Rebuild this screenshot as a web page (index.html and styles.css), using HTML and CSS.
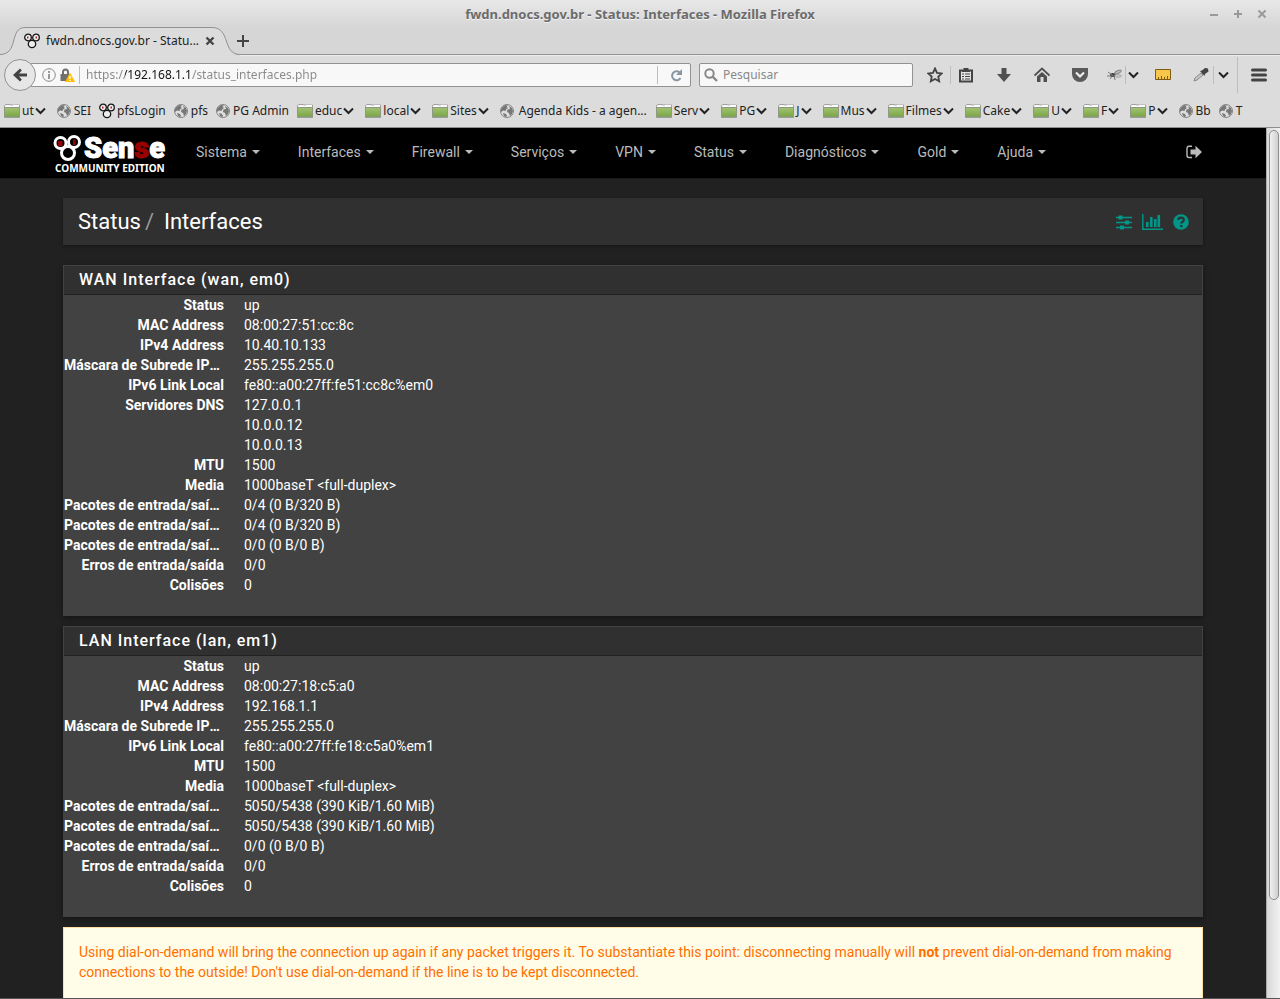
FILE: index.html
```html
<!DOCTYPE html>
<html lang="pt-BR">
<head>
<meta charset="utf-8">
<meta name="viewport" content="width=device-width, initial-scale=1">
<title>fwdn.dnocs.gov.br - Status: Interfaces</title>
<link rel="stylesheet" href="styles.css">
</head>
<body>
<svg class="sprite" aria-hidden="true">
  <defs>
    <linearGradient id="green" x1="0" y1="0" x2="0" y2="1"><stop offset="0" stop-color="#a3c374"/><stop offset="1" stop-color="#79a544"/></linearGradient>
    <symbol id="folder" viewBox="0 0 16 16">
      <path d="M.5 6V2.500L2 1.500h4l1 .5h8.500v4" fill="#f8f8f8" stroke="#a0a0a0"/>
      <path d="M.5 4.500h15v9.500H.5z" fill="url(#green)" stroke="#8f9885"/>
      <path d="M1 3.500h7l1-1h6" stroke="#fff" fill="none"/>
      <path d="M0 14.500h16" stroke="#8a8a8a" opacity=".6"/>
    </symbol>
    <symbol id="globe" viewBox="0 0 14 14">
      <circle cx="7" cy="7" r="6.500" fill="#dedede" stroke="#858585"/>
      <path d="M2 3.500 5 1l3 .5L6.500 3 8 4 6 5.500 5.500 7 3 6.500 1 8V5zM9 2l3 2 1 3-1 3-2 2-1-3-2-1 .5-2.500L10 5zM3 9l3 1 1 2-1 1-2-1z" fill="#777"/>
    </symbol>
    <symbol id="chev" viewBox="0 0 11 8"><path d="M1 1.500 5.500 6 10 1.500" fill="none" stroke="#222" stroke-width="2"/></symbol>
    <symbol id="rings" viewBox="0 0 16 16">
      <g fill="#eee" stroke="#151515" stroke-width="1.300"><circle cx="4" cy="4.500" r="3.300"/><circle cx="12" cy="4.500" r="3.300"/><circle cx="8" cy="11" r="3.700"/></g>
      <path d="M3 3.500h1.500v2H3zM11.500 3.500H13v2h-1.500z" fill="#b22"/>
    </symbol>
  </defs>
</svg>

<div class="window">
  <header class="chrome">
    <div class="titlebar">
      <span class="window-title">fwdn.dnocs.gov.br - Status: Interfaces - Mozilla Firefox</span>
      <div class="window-buttons">
        <button aria-label="Minimizar"><svg width="10" height="10"><path d="M1 6h8" stroke="#999" stroke-width="2"/></svg></button>
        <button aria-label="Maximizar"><svg width="10" height="10"><path d="M1 5h8M5 1v8" stroke="#999" stroke-width="2"/></svg></button>
        <button aria-label="Fechar"><svg width="10" height="10"><path d="M1.500 1.500l7 7m0-7l-7 7" stroke="#999" stroke-width="2"/></svg></button>
      </div>
    </div>
    <div class="tabs">
      <div class="tab">
        <svg class="tab-shape" width="240" height="29" aria-hidden="true"><path d="M0 27.500C19 27.500 9 .5 25 .5H212C231 .5 222 27.500 238 27.500H240V29H0z" fill="#dcdcdc"/><path d="M0 27.500C19 27.500 9 .5 25 .5H212C231 .5 222 27.500 240 27.500" fill="none" stroke="#929292"/></svg>
        <svg width="16" height="16" aria-hidden="true"><use href="#rings"/></svg>
        <span class="tab-label">fwdn.dnocs.gov.br - Statu...</span>
        <button aria-label="Fechar aba"><svg width="10" height="10"><path d="M1.500 1.500l7 7m0-7l-7 7" stroke="#444" stroke-width="2.400"/></svg></button>
      </div>
      <button class="new-tab" aria-label="Nova aba"><svg width="12" height="12"><path d="M0 6h12M6 0v12" stroke="#444" stroke-width="2"/></svg></button>
    </div>

    <div class="toolbar">
      <button class="back" aria-label="Voltar"><svg width="16" height="16"><path d="M1 8l7-6.500 1.800 2L7 6.500h8v3H7l2.800 3-1.800 2z" fill="#444"/></svg></button>
      <div class="urlbar">
        <svg width="14" height="14" aria-hidden="true"><circle cx="7" cy="7" r="6.300" fill="none" stroke="#888"/><path d="M7 3v2M7 6v5" stroke="#777" stroke-width="1.500"/></svg>
        <svg width="15" height="15" aria-hidden="true"><path d="M3 7V4a2.500 2.500 0 0 1 5 0v3" fill="none" stroke="#707070" stroke-width="2"/><path d="M.5 6h9v7h-9z" fill="#707070"/><path d="M10 4.500 15 14H5z" fill="#ffbf00"/><path d="M10 8v3m0 1v1" stroke="#fff" stroke-width="1.400"/></svg>
        <i class="rule"></i>
        <input class="url" type="text" aria-label="Endereço" value="https://192.168.1.1/status_interfaces.php">
        <i class="rule"></i>
        <button class="reload" aria-label="Recarregar"><svg width="13" height="13"><path d="M10 3.800A4.500 4.500 0 1 0 10.500 9" fill="none" stroke="#8a97a3" stroke-width="2"/><path d="M12 0v6H6z" fill="#8a97a3"/></svg></button>
      </div>
      <div class="search">
        <svg width="14" height="14" aria-hidden="true"><circle cx="5.500" cy="5.500" r="4.200" fill="none" stroke="#888" stroke-width="2"/><path d="M8.500 8.500 13 13" stroke="#888" stroke-width="2.400"/></svg>
        <input type="search" aria-label="Pesquisar" placeholder="Pesquisar">
      </div>
      <div class="tools">
        <button aria-label="Favoritar"><svg width="16" height="16"><path d="M8 1.500l2 4.300 4.700.6-3.400 3.200.9 4.700L8 12l-4.200 2.300.9-4.700L1.300 6.400 6 5.800z" fill="none" stroke="#444" stroke-width="1.800"/></svg></button>
        <i class="rule"></i>
        <button aria-label="Lista de favoritos"><svg width="16" height="16"><path d="M2 3.500h12v11H2z" fill="#e3e3e3" stroke="#444" stroke-width="2"/><path d="M4 4h1.500V1h5v3H12v1H4z" fill="#444"/><path d="M4 7h2m1 0h5M4 9.500h2m1 0h5M4 12h2m1 0h5" stroke="#444" stroke-width="1.200"/></svg></button>
      </div>
      <div class="tools spaced">
        <button aria-label="Downloads"><svg width="16" height="16"><path d="M5.500 1h5v6H15l-7 8-7-8h4.500z" fill="#505050"/></svg></button>
        <button aria-label="Início"><svg width="16" height="16"><path d="M.5 8.500 8 1.500l7.500 7" fill="none" stroke="#505050" stroke-width="1.800"/><path d="M3 9.500l5-4.600 5 4.600V15H9.500v-5h-3v5H3z" fill="#505050"/></svg></button>
        <button aria-label="Pocket"><svg width="16" height="16"><path d="M0 1h16v6a8 8 0 0 1-16 0z" fill="#5a5a5a"/><path d="M4 5.500l4 4 4-4" fill="none" stroke="#eee" stroke-width="2.200"/></svg></button>
      </div>
      <div class="tools bug">
        <button aria-label="Firebug"><svg width="16" height="16"><ellipse cx="6" cy="8" rx="3" ry="2" fill="#444"/><ellipse cx="11" cy="5" rx="3.500" ry="1.400" fill="#bbb" stroke="#888" transform="rotate(-25 11 5)"/><ellipse cx="11" cy="9" rx="3.500" ry="1.300" fill="#c9c9c9" stroke="#aaa"/><path d="M1 5l4 3M0 9h4M3 12l3-4m2 5L7 8" stroke="#777"/></svg></button>
        <i class="rule"></i>
        <button aria-label="Opções do Firebug"><svg width="11" height="8"><use href="#chev"/></svg></button>
      </div>
      <div class="tools ruler">
        <button aria-label="Régua"><svg width="16" height="16"><path d="M.5 2.500h15v10H.5z" fill="#f7c64a" stroke="#7e5d12"/><path d="M3.500 12v-2m3 2v-3m3 3v-2m3 2V9" stroke="#7e5d12"/></svg></button>
      </div>
      <div class="tools dropper">
        <button aria-label="Conta-gotas"><svg width="16" height="16"><path d="M1 14l1-3 6-5 2 2-6 5z" fill="#c5c5c5" stroke="#888"/><path d="M7 4l2-.5L12 1l3 .500.500 3L12 7l-.5 2z" fill="#444"/></svg></button>
        <i class="rule"></i>
        <button aria-label="Opções do conta-gotas"><svg width="11" height="8"><use href="#chev"/></svg></button>
      </div>
      <i class="rule tall"></i>
      <button class="menu" aria-label="Menu"><svg width="16" height="14"><path d="M1.500 2h13m-13 5h13m-13 5h13" stroke="#444" stroke-width="3" stroke-linecap="round"/></svg></button>
    </div>

    <nav class="bookmarks" aria-label="Favoritos">
      <button><svg width="16" height="16"><use href="#folder"/></svg>ut<svg class="chev" width="11" height="8"><use href="#chev"/></svg></button>
      <a href="#sei"><svg width="14" height="14"><use href="#globe"/></svg>SEI</a>
      <a href="#login" class="tight"><svg width="16" height="16"><use href="#rings"/></svg>pfsLogin</a>
      <a href="#pfs"><svg width="14" height="14"><use href="#globe"/></svg>pfs</a>
      <a href="#pg"><svg width="14" height="14"><use href="#globe"/></svg>PG Admin</a>
      <button><svg width="16" height="16"><use href="#folder"/></svg>educ<svg class="chev" width="11" height="8"><use href="#chev"/></svg></button>
      <button><svg width="16" height="16"><use href="#folder"/></svg>local<svg class="chev" width="11" height="8"><use href="#chev"/></svg></button>
      <button><svg width="16" height="16"><use href="#folder"/></svg>Sites<svg class="chev" width="11" height="8"><use href="#chev"/></svg></button>
      <a href="#agenda" class="wide"><svg width="14" height="14"><use href="#globe"/></svg>Agenda Kids - a agen...</a>
      <button><svg width="16" height="16"><use href="#folder"/></svg>Serv<svg class="chev" width="11" height="8"><use href="#chev"/></svg></button>
      <button><svg width="16" height="16"><use href="#folder"/></svg>PG<svg class="chev" width="11" height="8"><use href="#chev"/></svg></button>
      <button><svg width="16" height="16"><use href="#folder"/></svg>J<svg class="chev" width="11" height="8"><use href="#chev"/></svg></button>
      <button><svg width="16" height="16"><use href="#folder"/></svg>Mus<svg class="chev" width="11" height="8"><use href="#chev"/></svg></button>
      <button><svg width="16" height="16"><use href="#folder"/></svg>Filmes<svg class="chev" width="11" height="8"><use href="#chev"/></svg></button>
      <button><svg width="16" height="16"><use href="#folder"/></svg>Cake<svg class="chev" width="11" height="8"><use href="#chev"/></svg></button>
      <button><svg width="16" height="16"><use href="#folder"/></svg>U<svg class="chev" width="11" height="8"><use href="#chev"/></svg></button>
      <button><svg width="16" height="16"><use href="#folder"/></svg>F<svg class="chev" width="11" height="8"><use href="#chev"/></svg></button>
      <button><svg width="16" height="16"><use href="#folder"/></svg>P<svg class="chev" width="11" height="8"><use href="#chev"/></svg></button>
      <a href="#bb"><svg width="14" height="14"><use href="#globe"/></svg>Bb</a>
      <a href="#t"><svg width="14" height="14"><use href="#globe"/></svg>T</a>
    </nav>
  </header>

  <div class="viewport">
    <div class="page">
      <nav class="navbar">
        <div class="container">
          <a class="logo" href="#home" aria-label="Sense Community Edition">
            <span class="logo-top">
              <svg width="29" height="28" aria-hidden="true"><g fill="#000" stroke="#fff" stroke-width="3"><circle cx="7.500" cy="9" r="5.500"/><circle cx="21" cy="8" r="5.500"/><circle cx="15" cy="19" r="6.500"/></g><path d="M5 7h4.500v5H5zM20 5.500h2.500v5.500H20z" fill="#900"/></svg>
              <span class="logo-word">Sen<b>s</b>e</span>
            </span>
            <span class="logo-sub">COMMUNITY EDITION</span>
          </a>
          <ul class="menu-list">
            <li><a href="#sistema">Sistema</a></li>
            <li><a href="#interfaces">Interfaces</a></li>
            <li><a href="#firewall">Firewall</a></li>
            <li><a href="#servicos">Serviços</a></li>
            <li><a href="#vpn">VPN</a></li>
            <li><a href="#status">Status</a></li>
            <li><a href="#diagnosticos">Diagnósticos</a></li>
            <li><a href="#gold">Gold</a></li>
            <li><a href="#ajuda">Ajuda</a></li>
          </ul>
          <a class="logout" href="#logout" aria-label="Sair"><svg width="16" height="14"><path d="M6 1.200H3A2 2 0 0 0 1 3v7.500a2 2 0 0 0 2 2h3" fill="none" stroke="#bbb" stroke-width="1.400"/><path d="M4.500 4.500H9.500V.8L16 7l-6.500 6.200V9.500h-5z" fill="#bbb"/></svg></a>
        </div>
      </nav>

      <main class="content">
        <header class="page-header">
          <h1>Status<span class="slash">/</span>Interfaces</h1>
          <div class="shortcuts">
            <a href="#settings" aria-label="Configurações"><svg width="16" height="16"><path d="M0 3.500h16M0 8.500h16M0 13.500h16" stroke="#009688" stroke-width="1.600"/><path d="M2.500 1.500h4v4h-4zM9 6.500h4v4H9zM4 11.500h4v4H4z" fill="#009688"/></svg></a>
            <a href="#graph" aria-label="Gráfico"><svg width="21" height="16"><path d="M.8 0v15.200H21" fill="none" stroke="#009688" stroke-width="1.400"/><path d="M4 8h2.600v5H4zM8 3h2.600v10H8zM12 5h2.600v8H12zM15.500 1h2.600v12h-2.600z" fill="#009688"/></svg></a>
            <a href="#help" aria-label="Ajuda"><svg width="16" height="16"><circle cx="8" cy="8" r="7.800" fill="#009688"/><path d="M5.200 6C5.500 2.800 11 2.800 10.800 6c0 2-2.500 1.800-2.500 3.600M8.300 11v2.200" fill="none" stroke="#303030" stroke-width="2.200"/></svg></a>
          </div>
        </header>

        <section class="panel">
          <h2>WAN Interface (wan, em0)</h2>
          <dl>
            <dt>Status</dt><dd>up</dd>
            <dt>MAC Address</dt><dd>08:00:27:51:cc:8c</dd>
            <dt>IPv4 Address</dt><dd>10.40.10.133</dd>
            <dt>Máscara de Subrede IPv4</dt><dd>255.255.255.0</dd>
            <dt>IPv6 Link Local</dt><dd>fe80::a00:27ff:fe51:cc8c%em0</dd>
            <dt>Servidores DNS</dt><dd>127.0.0.1<br>10.0.0.12<br>10.0.0.13</dd>
            <dt>MTU</dt><dd>1500</dd>
            <dt>Media</dt><dd>1000baseT &lt;full-duplex&gt;</dd>
            <dt>Pacotes de entrada/saída</dt><dd>0/4 (0 B/320 B)</dd>
            <dt>Pacotes de entrada/saída</dt><dd>0/4 (0 B/320 B)</dd>
            <dt>Pacotes de entrada/saída</dt><dd>0/0 (0 B/0 B)</dd>
            <dt>Erros de entrada/saída</dt><dd>0/0</dd>
            <dt>Colisões</dt><dd>0</dd>
          </dl>
        </section>

        <section class="panel">
          <h2>LAN Interface (lan, em1)</h2>
          <dl>
            <dt>Status</dt><dd>up</dd>
            <dt>MAC Address</dt><dd>08:00:27:18:c5:a0</dd>
            <dt>IPv4 Address</dt><dd>192.168.1.1</dd>
            <dt>Máscara de Subrede IPv4</dt><dd>255.255.255.0</dd>
            <dt>IPv6 Link Local</dt><dd>fe80::a00:27ff:fe18:c5a0%em1</dd>
            <dt>MTU</dt><dd>1500</dd>
            <dt>Media</dt><dd>1000baseT &lt;full-duplex&gt;</dd>
            <dt>Pacotes de entrada/saída</dt><dd>5050/5438 (390 KiB/1.60 MiB)</dd>
            <dt>Pacotes de entrada/saída</dt><dd>5050/5438 (390 KiB/1.60 MiB)</dd>
            <dt>Pacotes de entrada/saída</dt><dd>0/0 (0 B/0 B)</dd>
            <dt>Erros de entrada/saída</dt><dd>0/0</dd>
            <dt>Colisões</dt><dd>0</dd>
          </dl>
        </section>

        <p class="alert">Using dial-on-demand will bring the connection up again if any packet triggers it. To substantiate this point: disconnecting manually will <strong>not</strong> prevent dial-on-demand from making connections to the outside! Don't use dial-on-demand if the line is to be kept disconnected.</p>
      </main>
    </div>
    <div class="scrollbar" aria-hidden="true"><div class="thumb"></div></div>
  </div>
</div>
</body>
</html>
```

FILE: styles.css
```css
* { box-sizing: border-box; }

body {
  margin: 0;
  background: #212121;
  font-family: Roboto, "Liberation Sans", sans-serif;
  font-size: 14px;
  line-height: 20px;
}

button, input {
  margin: 0;
  padding: 0;
  border: 0;
  background: none;
  color: inherit;
  font: inherit;
}

a { color: inherit; text-decoration: none; }
svg { display: block; flex: none; }
.sprite { position: absolute; width: 0; height: 0; }

.window {
  display: flex;
  flex-direction: column;
  height: 100vh;
  border-bottom: 1px solid #555;
}

/* Browser chrome */
.chrome {
  flex: none;
  background: #dcdcdc;
  border-bottom: 1px solid #8f8f8f;
  color: #222;
  font: 12px/18px "Noto Sans", sans-serif;
}

.titlebar {
  display: grid;
  grid-template-columns: 1fr auto 1fr;
  align-items: center;
  height: 27px;
  padding-right: 13px;
  background: linear-gradient(#e8e8e8, #d6d6d6);
}

.window-title {
  grid-column: 2;
  padding-left: 13px;
  color: #6b6b6b;
  font-size: 13px;
  font-weight: 700;
  text-shadow: 0 1px #f2f2f2;
}

.window-buttons {
  display: flex;
  justify-content: flex-end;
  gap: 14px;
}

.tabs {
  display: flex;
  align-items: center;
  height: 28px;
  background: #d6d6d6;
  border-bottom: 1px solid #929292;
}

.tab {
  position: relative;
  display: flex;
  align-items: center;
  width: 237px;
  height: 28px;
  padding-left: 24px;
}

.tab > * { position: relative; }
.tab > .tab-shape { position: absolute; left: 0; top: 0; }
.tab-label { padding: 0 6px; white-space: nowrap; }
.new-tab { display: flex; }

.toolbar {
  display: flex;
  align-items: center;
  height: 39px;
  padding: 0 13px 0 4px;
  border-top: 1px solid #ececec;
}

.back {
  z-index: 1;
  display: grid;
  place-items: center;
  width: 32px;
  height: 32px;
  border: 1px solid #929292;
  border-radius: 50%;
  background: #e6e6e6;
}

.rule { flex: none; width: 1px; height: 18px; background: #bdbdbd; }

.urlbar, .search {
  display: flex;
  align-items: center;
  height: 24px;
  border: 1px solid #929292;
  border-radius: 2px;
  background: #f8f8f8;
}

.urlbar {
  flex: 1;
  min-width: 0;
  gap: 4px;
  margin-left: -6px;
  padding-left: 11px;
}

.url {
  flex: 1;
  min-width: 0;
  margin-left: 2px;
  color: transparent;
  background: linear-gradient(90deg, #888 0 39px, #111 39px 105px, #888 105px);
  background-clip: text;
  -webkit-background-clip: text;
}

.reload { display: grid; place-items: center; width: 28px; }
.search { flex: none; width: 214px; gap: 5px; margin-left: 8px; padding-left: 4px; }
.search input { flex: 1; min-width: 0; }
.search input::placeholder { color: #888; opacity: 1; }

.tools { display: flex; align-items: center; gap: 7px; margin-left: 14px; }
.tools.spaced { gap: 22px; margin-left: 22px; }
.tools.bug { gap: 2px; margin-left: 19px; }
.tools.ruler { margin-left: 16px; }
.tools.dropper { gap: 4px; margin-left: 22px; }
.rule.tall { height: 36px; margin: 0 13px 0 8px; }

.bookmarks {
  display: flex;
  align-items: center;
  height: 33px;
  padding-left: 4px;
}

.bookmarks button, .bookmarks a {
  display: flex;
  align-items: center;
  white-space: nowrap;
}

.bookmarks button { gap: 2px; margin-right: 11px; }
.bookmarks button .chev { margin-left: -1px; }
.bookmarks a { gap: 3px; margin-right: 8px; }
.bookmarks .tight { gap: 2px; }
.bookmarks .wide { gap: 5px; margin-right: 9px; }

/* Web page */
.viewport { display: flex; flex: 1; min-height: 0; }
.page { flex: 1; min-width: 0; overflow: hidden; }

.scrollbar {
  flex: none;
  width: 14px;
  padding: 2px 1px 0 2px;
  border-left: 1px solid #aaa;
  background: linear-gradient(90deg, #d8d8d8, #f2f2f2);
}

.thumb {
  height: calc(89% - 3px);
  border: 1px solid #8c8c8c;
  border-radius: 6px;
  background: linear-gradient(90deg, #f0f0f0, #cfcfcf);
}

.navbar { background: #000; color: #bbb; border-bottom: 1px solid #1a1a1a; }

.container {
  display: flex;
  align-items: center;
  max-width: 1170px;
  height: 50px;
  margin: 0 auto;
  padding: 0 16px 2px 5px;
}

.logo { flex: none; width: 124px; margin-top: 4px; color: #fff; }
.logo-top { display: flex; align-items: center; height: 28px; }

.logo-word {
  padding-left: 2px;
  font: 900 29px/28px Roboto, "Noto Sans", sans-serif;
  -webkit-text-stroke: 1px;
}

.logo-word b { color: #900; font-weight: 900; }
.logo-sub { display: block; padding-left: 2px; font: 700 10px/12px "Noto Sans", sans-serif; white-space: nowrap; }

.menu-list {
  display: flex;
  flex: 1;
  margin: 0;
  padding: 0;
  list-style: none;
}

.menu-list a { display: flex; align-items: center; padding: 0 19px; }

.menu-list a::after {
  content: "";
  margin-left: 5px;
  border: 4px solid transparent;
  border-top-color: currentColor;
  border-bottom: 0;
}

.content { max-width: 1170px; margin: 0 auto; padding: 19px 15px 0; }

.page-header {
  display: flex;
  align-items: center;
  justify-content: space-between;
  height: 47px;
  margin-bottom: 20px;
  padding: 0 14px 0 15px;
  background: #303030;
  box-shadow: 0 1px 3px rgba(0, 0, 0, .4);
}

.page-header h1 { margin: 0; color: #fff; font-size: 22px; font-weight: 400; line-height: 24px; }
.slash { padding: 0 10px 0 4px; color: #999; }
.shortcuts { display: flex; gap: 10px; }

.panel {
  margin-bottom: 10px;
  border: 1px solid #424242;
  background: #424242;
  color: #fff;
  box-shadow: 0 2px 6px rgba(0, 0, 0, .4);
}

.panel h2 {
  margin: 0;
  padding: 4px 15px;
  border-bottom: 1px solid #212121;
  background: #303030;
  font-size: 16px;
  font-weight: 500;
  letter-spacing: 1px;
  line-height: 20px;
}

.panel dl {
  display: grid;
  grid-template-columns: 160px 1fr;
  column-gap: 20px;
  margin: 0 0 20px;
}

.panel dt {
  overflow: hidden;
  font-weight: 700;
  text-align: right;
  text-overflow: ellipsis;
  white-space: nowrap;
}

.panel dd { margin: 0; }

.alert {
  margin: 0;
  padding: 14px 15px 34px;
  border: 1px solid #ffe0a0;
  background: #fffde7;
  color: #ff6f00;
}
```
